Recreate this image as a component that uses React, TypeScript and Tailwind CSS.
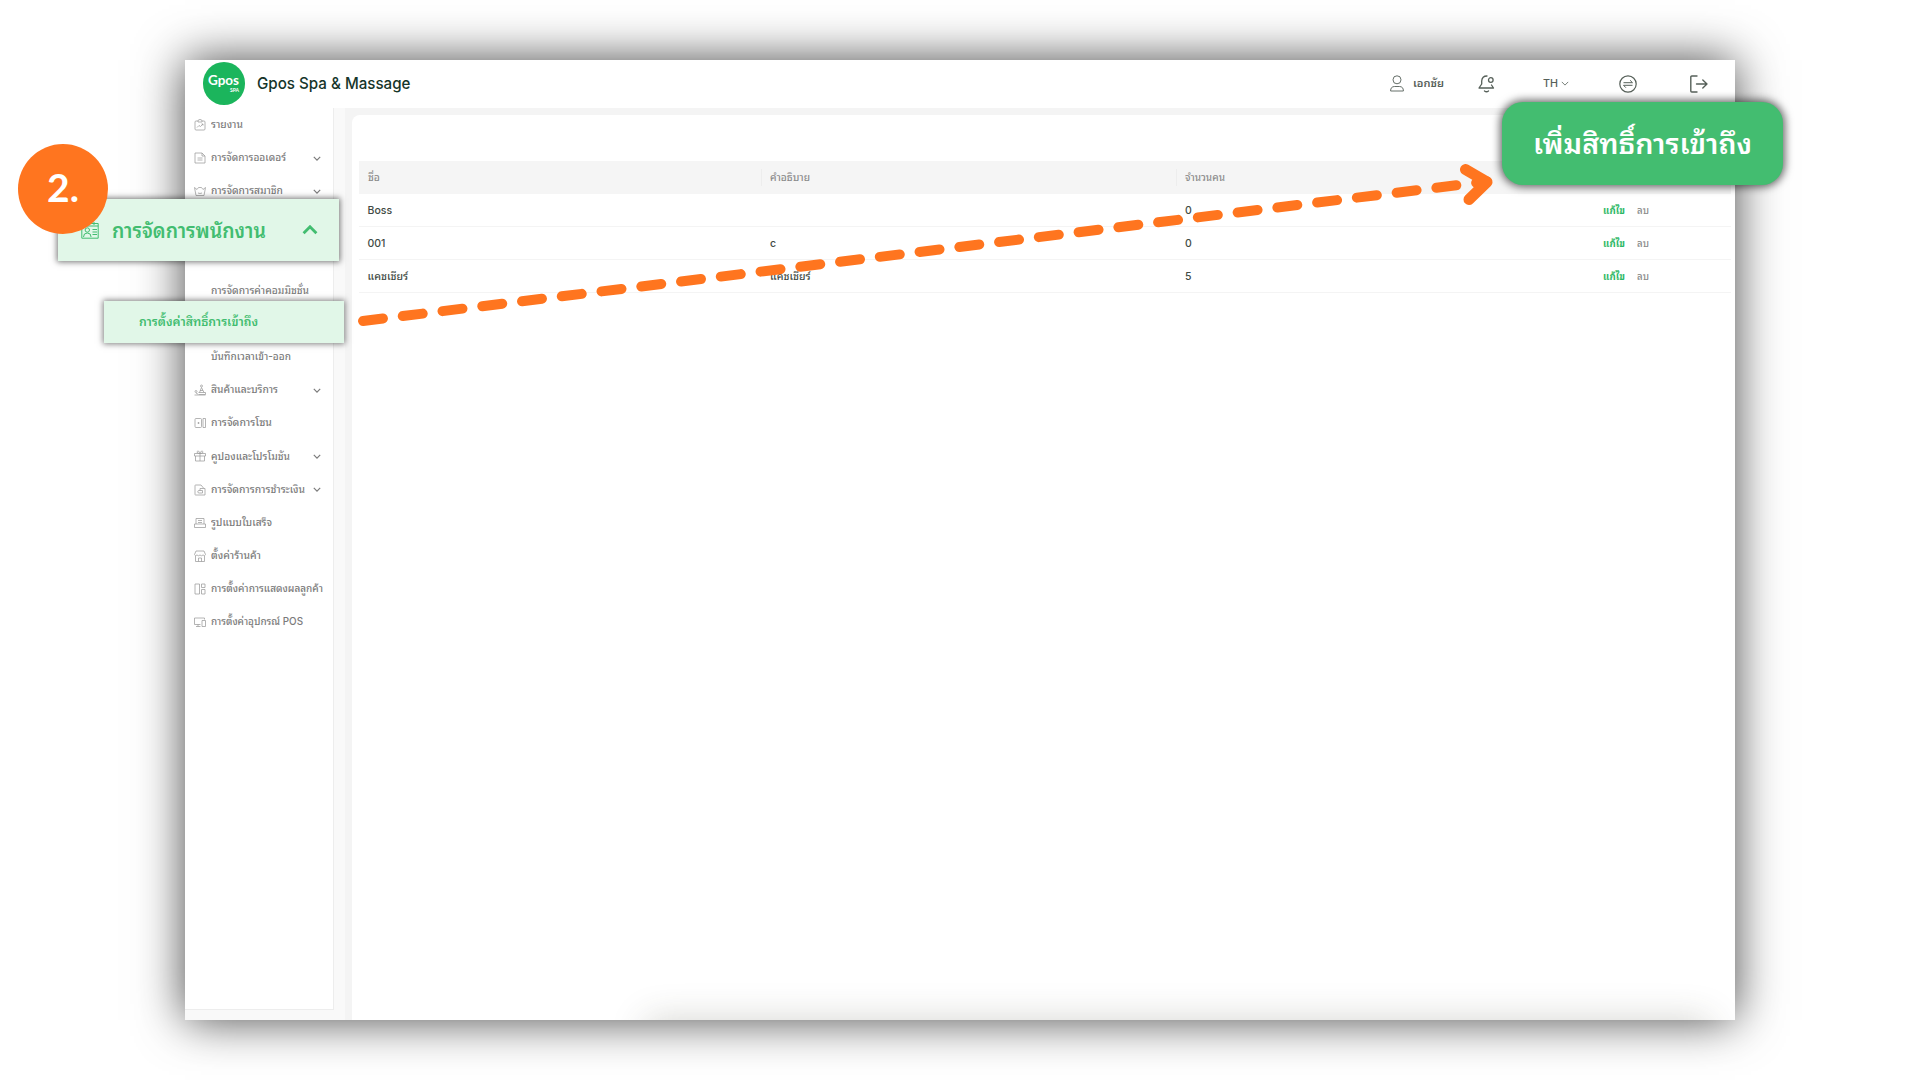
import React from 'react';

type IconName = 'report' | 'order' | 'member' | 'product' | 'zone' | 'coupon' | 'payment' | 'receipt' | 'shop' | 'display' | 'device';

interface MenuItem {
  icon?: IconName;
  label: string;
  width: string;
  expandable?: boolean;
}

const menu: MenuItem[] = [
  { icon: 'report', label: 'รายงาน', width: 'w-[32px]' },
  { icon: 'order', label: 'การจัดการออเดอร์', width: 'w-[75px]', expandable: true },
  { icon: 'member', label: 'การจัดการสมาชิก', width: 'w-[72px]', expandable: true },
  { label: '', width: '' },
  { label: '', width: '' },
  { label: 'การจัดการค่าคอมมิชชั่น', width: 'w-[98px]' },
  { label: '', width: '' },
  { label: 'บันทึกเวลาเข้า-ออก', width: 'w-[80px]' },
  { icon: 'product', label: 'สินค้าและบริการ', width: 'w-[67px]', expandable: true },
  { icon: 'zone', label: 'การจัดการโซน', width: 'w-[61px]' },
  { icon: 'coupon', label: 'คูปองและโปรโมชัน', width: 'w-[79px]', expandable: true },
  { icon: 'payment', label: 'การจัดการการชำระเงิน', width: 'w-[94px]', expandable: true },
  { icon: 'receipt', label: 'รูปแบบใบเสร็จ', width: 'w-[61px]' },
  { icon: 'shop', label: 'ตั้งค่าร้านค้า', width: 'w-[50px]' },
  { icon: 'display', label: 'การตั้งค่าการแสดงผลลูกค้า', width: 'w-[112px]' },
  { icon: 'device', label: 'การตั้งค่าอุปกรณ์ POS', width: 'w-[92px]' },
];

const rows = [
  { name: 'Boss', description: '', count: 0 },
  { name: '001', description: 'c', count: 0 },
  { name: 'แคชเชียร์', description: 'แคชเชียร์', count: 5 },
];

const iconPaths: Record<IconName, string> = {
  report: 'M8 4H4a2 2 0 0 0-2 2v14a2 2 0 0 0 2 2h16a2 2 0 0 0 2-2V6a2 2 0 0 0-2-2h-4M8 6V4q0-3 4-3t4 3v2zM6 17l4-4 3 2 5-5M15 10h3v3',
  order: 'M2 2h14l6 6v14H2zM16 2v6h6M7 12h10M7 16h10',
  member: 'M1 5l5 4 3-4h6l3 4 5-4-3 16H4zM8 16q4 2 8 0',
  product: 'M13 4a2 2 0 1 0 4 0 2 2 0 1 0-4 0M15 7l-4 10M15 7l5 10M9 17h14v4H10M2 15a2 2 0 1 0 4 0 2 2 0 1 0-4 0M1 22h22M4 18l5 3M12 13h6',
  zone: 'M4 3h9a2 2 0 0 1 2 2v14a2 2 0 0 1-2 2H4a2 2 0 0 1-2-2V5a2 2 0 0 1 2-2zM18 3h5v18h-5zM8 11h2v2H8z',
  coupon: 'M1 7h22v5H1zM3 12v10h18V12M12 7v15M12 7Q5 7 6 3.500q1-2 3.500-1Q12 4 12 7q0-3 2.500-4.500 2.500-1 3.500 1Q19 7 12 7',
  payment: 'M19 8l-5-6H3a1 1 0 0 0-1 1v18a1 1 0 0 0 1 1h19V9H12v4M14 13H10a2.500 2.500 0 0 0 0 5h7v-5z',
  receipt: 'M4 14V3h16v11M8 7h8M8 11h8M1 14h22v7H1z',
  shop: 'M4 2h16l3 7q-1 4-5 1-3 3-6 0-3 3-6 0-4 3-5-1zM3 12v11h18V12M9 23v-7h6v7',
  display: 'M2 2h9v20H2zM15 2h7v7h-7zM15 13h7v9h-7z',
  device: 'M13 17H1V4h20v3M8 17v4M4 21h9M16 9h7v12h-7z',
};

const MenuIcon = ({ name }: { name: IconName }) => (
  <svg viewBox="0 0 24 24" className="h-3 w-3" fill="none" stroke="currentColor" strokeWidth={1.5} strokeLinejoin="round">
    <path d={iconPaths[name]} />
  </svg>
);

const Chevron = ({ className }: { className: string }) => (
  <svg viewBox="0 0 10 6" className={className} fill="none" stroke="currentColor">
    <path d="M1 1l4 4 4-4" />
  </svg>
);

// Stretches or tightens a line of text to a known width
const FitText = ({ children, className }: { children: string; className: string }) => {
  const ref = React.useRef<HTMLSpanElement>(null);
  const [scale, setScale] = React.useState(1);

  React.useLayoutEffect(() => {
    const el = ref.current;
    if (el && el.parentElement && el.offsetWidth) {
      setScale(el.parentElement.getBoundingClientRect().width / el.getBoundingClientRect().width);
    }
  }, []);

  return (
    <span className={`block shrink-0 whitespace-nowrap ${className}`}>
      <span ref={ref} className="inline-block origin-left" style={{ transform: `scaleX(${scale})` }}>{children}</span>
    </span>
  );
};

const Header = () => (
  <header className="flex h-12 shrink-0 items-center bg-white pl-[18px] pb-px text-[#566059]">
    <div className="flex h-[42.500px] w-[42.500px] flex-col items-end justify-center rounded-full bg-[#1bb55c] pr-1.5 text-white">
      <FitText className="w-[31px] font-[Lato] text-[12.500px] font-bold leading-[12px]">Gpos</FitText>
      <span className="mt-px font-[Lato] text-[5px] font-bold leading-[5px]">SPA</span>
    </div>
    <FitText className="mb-px ml-[11.500px] w-[153.500px] text-[16px] font-medium text-[#16352a]">Gpos Spa &amp; Massage</FitText>
    <div className="ml-auto flex items-center pr-[27px]">
      <svg viewBox="0 0 14 17" className="h-[17px] w-3.5" fill="none" stroke="currentColor" strokeWidth={0.9}>
        <circle cx="7" cy="4.800" r="4" />
        <path d="M.6 16q0-4.500 4-4.500h4.800q4 0 4 4.500z" />
      </svg>
      <FitText className="ml-[9px] w-[31px] text-[11px] font-semibold">เอกชัย</FitText>
      <svg viewBox="0 0 17 18" className="ml-[34px] h-[18px] w-[17px]" fill="none" stroke="currentColor" strokeWidth={1.3} strokeLinecap="round" strokeLinejoin="round">
        <path d="M9 1Q4 1 3.700 6v3L1 13h14.500l-2-3" />
        <circle cx="12.800" cy="5" r="2.300" />
        <path d="M6.500 16q2 1.500 4 0" />
      </svg>
      <FitText className="ml-12 w-[15px] text-[11px] font-medium">TH</FitText>
      <Chevron className="ml-[3px] h-[5px] w-2" />
      <svg viewBox="0 0 18 18" className="ml-[50px] h-[18px] w-[18px]" fill="none" stroke="currentColor" strokeWidth={1.2}>
        <circle cx="9" cy="9" r="8.200" />
        <path d="M4.500 7.700h9l-2.400-2.400M13.500 10.300h-9l2.400 2.400" strokeWidth={1} />
      </svg>
      <svg viewBox="0 0 18 18" className="ml-[53px] h-[18px] w-[18px]" fill="none" stroke="currentColor" strokeWidth={1.4} strokeLinecap="round" strokeLinejoin="round">
        <path d="M7 1H1.800a1 1 0 0 0-1 1v14a1 1 0 0 0 1 1H7M6.500 9H17M12.800 5L17 9l-4.200 4" />
      </svg>
    </div>
  </header>
);

const Sidebar = () => (
  <aside className="mb-[10px] w-[149px] shrink-0 border-r border-b border-[#ededed] bg-white pt-[0.500px] text-[#7b7b7b]">
    {menu.map((item, i) => (
      <div key={i} className="flex h-[33.150px] items-center pl-[9px]">
        <span className="mr-[5px] w-3 shrink-0 text-[#9b9b9b]">{item.icon && <MenuIcon name={item.icon} />}</span>
        {item.label && <FitText className={`text-[10.500px] font-medium ${item.width}`}>{item.label}</FitText>}
        {item.expandable && <Chevron className="ml-auto mr-3 h-[5px] w-2 shrink-0 stroke-[1.5]" />}
      </div>
    ))}
  </aside>
);

const AccessTable = () => (
  <main className="ml-[7.500px] mt-[7px] flex-1 rounded-tl-lg bg-white pl-[6.500px] pr-1 pt-[46px]">
    <div className="grid h-[33px] grid-cols-[402.500px_415px_1fr] items-center bg-[#f5f5f5] text-[10px] font-medium text-[#8b8b8b]">
      <FitText className="ml-[9px] w-3">ชื่อ</FitText>
      <div className="flex h-[17px] items-center border-l border-[#ededed] pl-2">
        <FitText className="w-10">คำอธิบาย</FitText>
      </div>
      <div className="flex h-[17px] items-center border-l border-[#ededed] pl-2">
        <FitText className="w-10">จำนวนคน</FitText>
      </div>
    </div>
    {rows.map((row) => (
      <div key={row.name} className="grid h-[33.150px] grid-cols-[402.500px_415px_417px_1fr] items-center border-b border-[#f4f4f4] pt-[1.500px] text-[10.500px] font-medium text-[#3f4a44]">
        <span className="pl-[9px]">{row.name}</span>
        <span className="pl-[9px]">{row.description}</span>
        <span className="pl-[9px]">{row.count}</span>
        <div className="flex items-center pl-[9.500px]">
          <FitText className="w-[22px] font-bold text-[#2db865]">แก้ไข</FitText>
          <FitText className="ml-3 w-3 text-[#8b8b8b]">ลบ</FitText>
        </div>
      </div>
    ))}
  </main>
);

const App: React.FC = () => {
  return (
    <div className="relative h-[1080px] w-[1920px] overflow-hidden bg-white font-[Inter,'Noto_Sans_Thai_Looped','Noto_Looped_Thai','Loma','Garuda','Umpush','Waree','Tlwg_Typo','Laksaman','Sarabun',sans-serif]">
      <div className="relative ml-[184.500px] mt-[60px] flex h-[960px] w-[1550.500px] flex-col overflow-visible shadow-[0_0_45px_0_rgba(0,0,0,0.72)]">
        <Header />
        <div className="flex min-h-0 flex-1 bg-[#f9f9f9]">
          <Sidebar />
          <div className="ml-[11px] flex flex-1 bg-[#f4f4f4]">
            <AccessTable />
          </div>
        </div>
        <div className="absolute bottom-0 right-0 h-10 w-[1130px] overflow-hidden">
          <div className="ml-[42px] mt-10 h-10 w-[1062px] shadow-[0_0_36px_0_rgba(60,60,40,0.22)]" />
        </div>
      </div>

      {/* highlighted menu entries */}
      <div className="absolute left-[58px] top-[199px] flex h-[62px] w-[281px] items-center bg-[#e1f7e8] text-[#42bd70] shadow-[0_0_6px_1px_rgba(0,0,0,0.55)]">
        <svg viewBox="0 0 18 18" className="ml-[22.500px] h-[18px] w-[18px]" fill="none" stroke="currentColor" strokeWidth={1}>
          <path d="M.8 2.500h16.400v14.700H.8zM5 1v3M13 1v3M.8 5h16.400M2.500 16q0-4 3.800-4t3.800 4M11.500 8.500H16M11.500 11H16M11.500 13.500H16" />
          <circle cx="6.300" cy="9" r="2.200" />
        </svg>
        <FitText className="ml-[13px] mt-0.5 w-[154px] text-[20px] font-semibold">การจัดการพนักงาน</FitText>
        <Chevron className="ml-[36px] h-[10px] w-4 rotate-180 stroke-[1.8]" />
      </div>
      <div className="absolute left-[104px] top-[301px] flex h-[41.500px] w-[240px] items-center bg-[#e1f7e8] pl-[34.500px] pt-px text-[#42bd70] shadow-[0_0_6px_1px_rgba(0,0,0,0.5)]">
        <FitText className="w-[119px] text-[12.500px] font-semibold">การตั้งค่าสิทธิ์การเข้าถึง</FitText>
      </div>
      <div className="absolute left-[18px] top-[143.500px] flex h-[90px] w-[90px] items-center justify-center rounded-full bg-[#ff751f] pb-[3px] font-[Lato] text-[39px] font-bold text-white">2.</div>

      <svg className="absolute left-0 top-0 h-[1080px] w-[1920px]" fill="none" stroke="#ff751f" strokeWidth={10} strokeLinecap="round" strokeLinejoin="round">
        <path d="M363 321L1487 181.500" strokeDasharray="20.100 19.960" />
        <path d="M1465.500 169.500L1487 182l-18 17.500" strokeWidth={11} />
      </svg>

      <div className="absolute left-[1502px] top-[102px] flex h-[83px] w-[281px] items-center rounded-[21px] bg-[#43bd70] pl-[30.500px] pt-0.5 text-white shadow-[0_0_8px_2px_rgba(0,0,0,0.6)]">
        <FitText className="w-[219px] text-[27.500px] font-semibold">เพิ่มสิทธิ์การเข้าถึง</FitText>
      </div>
    </div>
  );
};

export default App;
